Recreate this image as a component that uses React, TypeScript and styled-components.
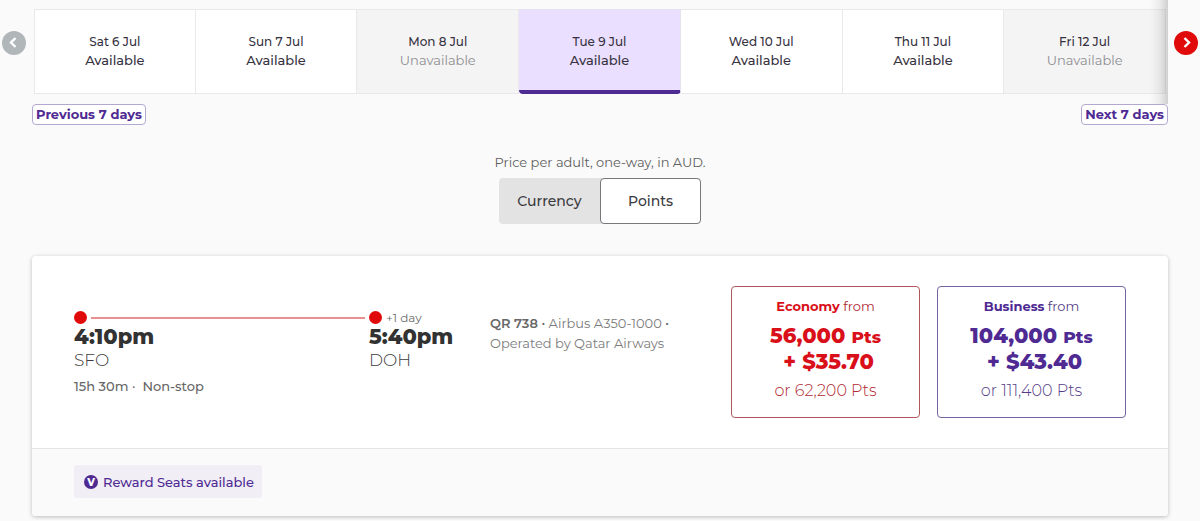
import React from "react";
import styled, { createGlobalStyle } from "styled-components";

const PURPLE = "#4f2a93";
const RED = "#e10a0a";

const GlobalStyle = createGlobalStyle`
  * { box-sizing: border-box; }
  body {
    margin: 0;
    background: #fafafa;
    color: #323232;
    font-family: Montserrat, Inter, sans-serif;
    font-size: 13px;
    line-height: 20px;
  }
  button { font: inherit; cursor: pointer; }
  p { margin: 0; }
`;

const Page = styled.main`
  padding-bottom: 4px;
`;

const DateBar = styled.section`
  display: flex;
  align-items: center;
  gap: 8px;
  padding: 0 2px;
`;

const ArrowButton = styled.button<{ $active?: boolean }>`
  display: flex;
  flex: none;
  align-items: center;
  justify-content: center;
  width: 24px;
  height: 24px;
  margin-bottom: 18px;
  padding: 0;
  border: 0;
  border-radius: 50%;
  background: ${(p) => (p.$active ? RED : "#b1b6b9")};
`;

const DateViewport = styled.div`
  position: relative;
  flex: 1;
  padding: 9px 0 10px;
`;

const EdgeShadow = styled.div`
  position: absolute;
  top: 0;
  right: -2px;
  bottom: 0;
  width: 18px;
  background: linear-gradient(to right, rgba(0, 0, 0, 0), rgba(0, 0, 0, 0.05) 50%, rgba(0, 0, 0, 0.17));
  pointer-events: none;
`;

const DateStrip = styled.div`
  display: grid;
  grid-template-columns: repeat(7, 1fr);
`;

type DayState = "open" | "closed" | "selected";

const dayBackground: Record<DayState, string> = {
  open: "#ffffff",
  closed: "#f4f4f4",
  selected: "#eadffe",
};

const DayButton = styled.button<{ $state: DayState }>`
  display: flex;
  flex-direction: column;
  align-items: center;
  height: 85px;
  padding: 22px 0 0;
  border: solid #e9e9e9;
  border-width: 1px 1px 1px 0;
  background: ${(p) => dayBackground[p.$state]};
  color: #37323f;
  font-weight: 500;
  line-height: 19px;
  &:first-child { border-left-width: 1px; }
  ${(p) =>
    p.$state === "selected" &&
    `border-color: #e6e0f0; border-bottom: 4px solid ${PURPLE}; border-radius: 0 0 4px 4px;`}
`;

const DayDate = styled.span`
  font-size: 12px;
`;

const DayStatus = styled.span<{ $muted: boolean }>`
  font-size: 13px;
  ${(p) => p.$muted && "color: #8e8e92; font-weight: 400;"}
`;

const WeekNav = styled.nav`
  display: flex;
  justify-content: space-between;
  padding: 0 32px;
`;

const WeekButton = styled.button`
  padding: 0 3px;
  border: 1px solid #b3a8d0;
  border-radius: 4px;
  background: #ffffff;
  color: ${PURPLE};
  font-size: 13px;
  font-weight: 700;
  line-height: 19px;
`;

const PriceMode = styled.section`
  display: flex;
  flex-direction: column;
  align-items: center;
  gap: 6px;
  margin: 27px 0 32px;
  color: #5e615e;
`;

const Toggle = styled.div`
  display: flex;
  border-radius: 4px;
  background: #e3e3e3;
`;

const ToggleButton = styled.button<{ $on?: boolean }>`
  width: 101px;
  height: 46px;
  padding: 0;
  border: 1px solid ${(p) => (p.$on ? "#77777c" : "transparent")};
  border-radius: 4px;
  background: ${(p) => (p.$on ? "#ffffff" : "transparent")};
  color: #3a3a3e;
  font-size: 14px;
  font-weight: 500;
`;

const FlightCard = styled.article`
  margin: 0 32px;
  border-radius: 4px;
  background: #ffffff;
  box-shadow: 0 1px 4px rgba(0, 0, 0, 0.25);
`;

const FlightBody = styled.div`
  display: grid;
  grid-template-columns: 295fr 121fr 241fr 395fr;
  padding: 30px 42px;
`;

const Stop = styled.div`
  padding-top: 22px;
`;

const Track = styled.div`
  display: flex;
  align-items: center;
  gap: 4px;
  height: 19px;
  padding-right: 4px;
  color: #6c6c6c;
  font-size: 12px;
`;

const Dot = styled.span`
  flex: none;
  width: 13px;
  height: 13px;
  border-radius: 50%;
  background: ${RED};
`;

const Line = styled.span`
  flex: 1;
  height: 2px;
  background: #e88f8f;
`;

const Time = styled.div`
  font-size: 21px;
  font-weight: 800;
  line-height: 20px;
`;

const Airport = styled.div`
  color: #3c3c40;
  font-size: 17px;
  font-weight: 300;
  line-height: 26px;
`;

const Duration = styled.div`
  margin-top: 1px;
  color: #666666;
  font-weight: 500;
  line-height: 24px;
`;

const Details = styled.p`
  max-width: 200px;
  padding-top: 27px;
  color: #7c7c7c;
`;

const Flight = styled.strong`
  color: #686868;
  font-weight: 600;
`;

const Fares = styled.div`
  display: grid;
  grid-template-columns: 1fr 1fr;
  gap: 17px;
`;

const FareButton = styled.button<{ $tone: string; $edge: string; $soft: string }>`
  display: flex;
  flex-direction: column;
  align-items: center;
  padding: 9px 0 14px;
  border: 1px solid ${(p) => p.$edge};
  border-radius: 4px;
  background: #ffffff;
  color: ${(p) => p.$soft};
  strong { color: ${(p) => p.$tone}; }
`;

const Cabin = styled.strong`
  font-weight: 700;
`;

const Price = styled.strong`
  margin-top: 7px;
  font-size: 21px;
  font-weight: 800;
  line-height: 26px;
  small { font-size: 17px; line-height: 17px; }
`;

const Alternative = styled.span`
  margin-top: 4px;
  font-size: 16px;
  font-weight: 300;
  line-height: 24px;
`;

const FlightFooter = styled.footer`
  display: flex;
  padding: 16px 42px 18px;
  border-top: 1px solid #e4e4e4;
  border-radius: 0 0 4px 4px;
  background: #fafafa;
`;

const RewardTag = styled.span`
  display: flex;
  align-items: center;
  gap: 5px;
  padding: 7px 8px 6px 10px;
  border-radius: 3px;
  background: #f1eef6;
  color: ${PURPLE};
  font-weight: 500;
`;

const Badge = styled.span`
  width: 14px;
  height: 14px;
  border-radius: 50%;
  background: ${PURPLE};
  color: #ffffff;
  font-size: 10px;
  font-weight: 800;
  line-height: 15px;
  text-align: center;
`;

const days: { date: string; state: DayState }[] = [
  { date: "Sat 6 Jul", state: "open" },
  { date: "Sun 7 Jul", state: "open" },
  { date: "Mon 8 Jul", state: "closed" },
  { date: "Tue 9 Jul", state: "selected" },
  { date: "Wed 10 Jul", state: "open" },
  { date: "Thu 11 Jul", state: "open" },
  { date: "Fri 12 Jul", state: "closed" },
];

const fares = [
  { cabin: "Economy", points: "56,000", cash: "$35.70", full: "62,200", tone: "#d9101a", edge: "#b0585c", soft: "#b02a32" },
  { cabin: "Business", points: "104,000", cash: "$43.40", full: "111,400", tone: PURPLE, edge: "#75639f", soft: "#553c85" },
];

const Chevron = ({ d }: { d: string }) => (
  <svg width="12" height="12" viewBox="0 0 12 12" fill="none" stroke="#fff" strokeWidth="2.4" aria-hidden="true">
    <path d={d} />
  </svg>
);

export default function App() {
  return (
    <Page>
      <GlobalStyle />
      <DateBar>
        <ArrowButton aria-label="Earlier dates">
          <Chevron d="M7.5 1 3 5.5 7.5 10" />
        </ArrowButton>
        <DateViewport>
          <DateStrip>
            {days.map((day) => (
              <DayButton key={day.date} $state={day.state} aria-pressed={day.state === "selected"}>
                <DayDate>{day.date}</DayDate>
                <DayStatus $muted={day.state === "closed"}>
                  {day.state === "closed" ? "Unavailable" : "Available"}
                </DayStatus>
              </DayButton>
            ))}
          </DateStrip>
          <EdgeShadow />
        </DateViewport>
        <ArrowButton $active aria-label="Later dates">
          <Chevron d="M4.5 1 9 5.5 4.5 10" />
        </ArrowButton>
      </DateBar>
      <WeekNav>
        <WeekButton>Previous 7 days</WeekButton>
        <WeekButton>Next 7 days</WeekButton>
      </WeekNav>
      <PriceMode>
        <p>Price per adult, one-way, in AUD.</p>
        <Toggle>
          <ToggleButton aria-pressed={false}>Currency</ToggleButton>
          <ToggleButton $on aria-pressed={true}>Points</ToggleButton>
        </Toggle>
      </PriceMode>
      <FlightCard>
        <FlightBody>
          <Stop>
            <Track>
              <Dot />
              <Line />
            </Track>
            <Time>4:10pm</Time>
            <Airport>SFO</Airport>
            <Duration>15h 30m ·&nbsp; Non-stop</Duration>
          </Stop>
          <Stop>
            <Track>
              <Dot />
              <span>+1 day</span>
            </Track>
            <Time>5:40pm</Time>
            <Airport>DOH</Airport>
          </Stop>
          <Details>
            <Flight>QR 738 ·</Flight> Airbus A350-1000 <Flight>·</Flight> Operated by Qatar Airways
          </Details>
          <Fares>
            {fares.map((fare) => (
              <FareButton key={fare.cabin} $tone={fare.tone} $edge={fare.edge} $soft={fare.soft}>
                <span>
                  <Cabin>{fare.cabin}</Cabin> from
                </span>
                <Price>
                  {fare.points} <small>Pts</small>
                  <br />
                  &nbsp;+ {fare.cash}
                </Price>
                <Alternative>or {fare.full} Pts</Alternative>
              </FareButton>
            ))}
          </Fares>
        </FlightBody>
        <FlightFooter>
          <RewardTag>
            <Badge>V</Badge>
            Reward Seats available
          </RewardTag>
        </FlightFooter>
      </FlightCard>
    </Page>
  );
}
